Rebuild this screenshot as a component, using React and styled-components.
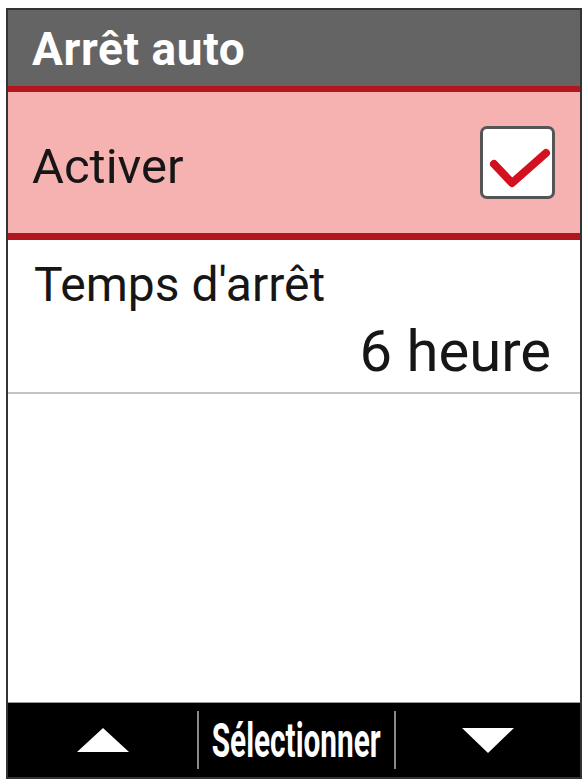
import React from "react";
import styled, { createGlobalStyle } from "styled-components";

const GlobalStyle = createGlobalStyle`
  html, body {
    margin: 0;
    padding: 0;
    background: #ffffff;
  }
  body {
    font-family: Roboto, "Liberation Sans", Arial, sans-serif;
  }
`;

const Frame = styled.div`
  box-sizing: border-box;
  margin: 8px 0 0 6px;
  width: 576px;
  height: 771px;
  border: 2px solid #333333;
  display: flex;
  flex-direction: column;
  background: #ffffff;
  overflow: hidden;
`;

const Header = styled.div`
  height: 76px;
  flex-shrink: 0;
  background: #646464;
  color: #ffffff;
  display: flex;
  align-items: center;
  padding: 2px 0 0 24px;
  box-sizing: border-box;
  font-size: 46px;
  font-weight: 700;
  letter-spacing: 0.6px;
`;

const RedRule = styled.div`
  height: ${(p) => p.$h}px;
  flex-shrink: 0;
  background: #b3161f;
`;

const ToggleRow = styled.div`
  height: 141px;
  flex-shrink: 0;
  background: #f6b1b1;
  display: flex;
  align-items: center;
  justify-content: space-between;
  padding: 0 25px 0 24px;
  box-sizing: border-box;
`;

const Label = styled.span`
  font-size: ${(p) => p.$size || 48}px;
  line-height: 1.1;
  color: #161616;
  margin-top: ${(p) => p.$shift || 0}px;
`;

const CheckBox = styled.div`
  width: 75px;
  height: 73px;
  box-sizing: border-box;
  border: 3px solid #555555;
  border-radius: 7px;
  background: #ffffff;
  display: flex;
  align-items: center;
  justify-content: center;
`;

const ValueRow = styled.div`
  height: 154px;
  flex-shrink: 0;
  box-sizing: border-box;
  border-bottom: 2px solid #c4c4c4;
  display: flex;
  flex-direction: column;
  padding: 19px 29px 0 26px;
`;

const Value = styled.span`
  align-self: flex-end;
  font-size: 58px;
  line-height: 1.1;
  color: #161616;
  margin-top: 8px;
`;

const Spacer = styled.div`
  flex: 1;
`;

const Footer = styled.div`
  height: 75px;
  flex-shrink: 0;
  background: #000000;
  border-top: 1px solid #9a9a9a;
  box-sizing: border-box;
  display: grid;
  grid-template-columns: 189px 2px 195px 2px 1fr;
  align-items: center;
`;

const Cell = styled.div`
  display: flex;
  align-items: center;
  justify-content: center;
  height: 100%;
`;

const Divider = styled.div`
  width: 2px;
  height: 58px;
  background: #8a8a8a;
`;

const SoftKey = styled.span`
  display: inline-block;
  color: #ffffff;
  font-size: 48px;
  font-weight: 700;
  transform: scaleX(0.62);
  white-space: nowrap;
  margin-top: 0;
`;

const Arrow = ({ up }) => (
  <svg width="54" height="27" viewBox="0 0 54 27">
    {up ? (
      <polygon points="27,1 53,25 1,25" fill="#ffffff" />
    ) : (
      <polygon points="1,1 53,1 27,26" fill="#ffffff" />
    )}
  </svg>
);

const App = () => {
  return (
    <>
      <GlobalStyle />
      <Frame>
        <Header>Arrêt auto</Header>
        <RedRule $h={6} />
        <ToggleRow>
          <Label $size={49} $shift={8}>Activer</Label>
          <CheckBox>
            <svg width="66" height="60" viewBox="0 0 66 60">
              <polyline
                points="9,31 27,50 61,20"
                fill="none"
                stroke="#d3101f"
                strokeWidth="8"
                strokeLinejoin="round"
                strokeLinecap="round"
              />
            </svg>
          </CheckBox>
        </ToggleRow>
        <RedRule $h={7} />
        <ValueRow>
          <Label>Temps d'arrêt</Label>
          <Value>6 heure</Value>
        </ValueRow>
        <Spacer />
        <Footer>
          <Cell>
            <Arrow up />
          </Cell>
          <Divider />
          <Cell>
            <SoftKey>Sélectionner</SoftKey>
          </Cell>
          <Divider />
          <Cell>
            <Arrow />
          </Cell>
        </Footer>
      </Frame>
    </>
  );
};

export default App;
